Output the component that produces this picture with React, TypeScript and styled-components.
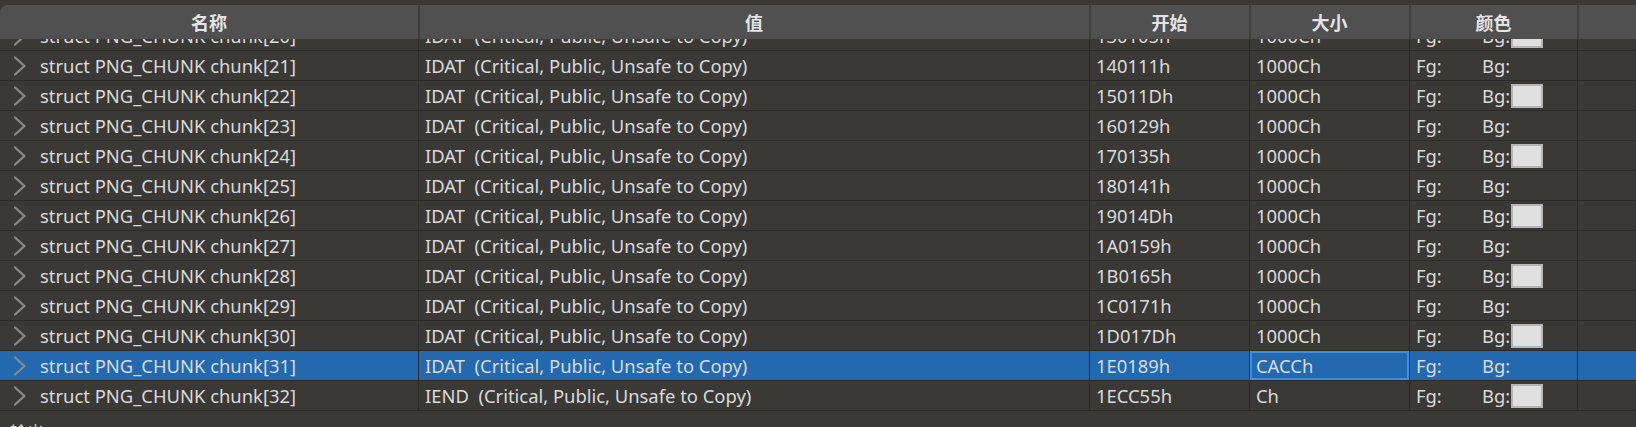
import React, { useLayoutEffect, useRef } from "react";
import styled, { createGlobalStyle, css } from "styled-components";

const GlobalStyle = createGlobalStyle`
  html, body {
    margin: 0;
    padding: 0;
    background: #3b3936;
    overflow: hidden;
  }
  * { box-sizing: border-box; }
`;

const COLS = "419px 671px 160px 160px 168px 1fr";
const FONT = `"Noto Sans", "Noto Sans CJK SC", sans-serif`;

const Page = styled.div`
  width: 1636px;
  height: 427px;
  background: #3b3936;
  padding-top: 5px;
  display: flex;
  flex-direction: column;
  font-family: ${FONT};
  overflow: hidden;
`;

const Header = styled.div`
  display: grid;
  grid-template-columns: ${COLS};
  height: 34px;
  background: #505050;
  border-top-left-radius: 8px;
  flex: none;
`;

const HeaderCell = styled.div`
  display: flex;
  align-items: center;
  justify-content: center;
  border-right: 2px solid #3e3e3e;
  margin-right: -1px;
  color: #e4e4e4;
  font-size: 18px;
  font-weight: 700;
  font-family: "Noto Sans CJK SC", sans-serif;
  &:last-child {
    border-right: none;
    margin-right: 0;
  }
`;

const Body = styled.div`
  height: 372px;
  overflow: hidden;
  flex: none;
  border-bottom: 1px solid #2b2a28;
`;

const Row = styled.div<{ $selected?: boolean }>`
  display: grid;
  grid-template-columns: ${COLS};
  height: 30px;
  border-bottom: 1px solid #2b2a28;
  background: ${(p) => (p.$selected ? "#2269b0" : "transparent")};
  color: #dadada;
  font-size: 18.4px;
`;

const Cell = styled.div<{ $focused?: boolean }>`
  display: flex;
  align-items: center;
  padding-left: 6px;
  border-right: 1px solid #2b2a28;
  white-space: nowrap;
  overflow: hidden;
  ${(p) =>
    p.$focused &&
    css`
      box-shadow: inset 0 0 0 2px #3a8fe6;
    `}
  &:last-child {
    border-right: none;
  }
`;

const NameCell = styled(Cell)`
  padding-left: 13px;
  gap: 13px;
`;

const ColorCell = styled(Cell)`
  gap: 0;
`;

const FgLabel = styled.span`
  width: 66px;
`;

const BgLabel = styled.span`
  display: flex;
  align-items: center;
  gap: 1px;
`;

const Swatch = styled.span`
  display: inline-block;
  width: 32px;
  height: 24px;
  background: #e0e0e0;
  border: 2px solid #b6b6b6;
`;

const Footer = styled.div`
  flex: 1;
  padding: 8px 0 0 10px;
  color: #d4d4d4;
  font-size: 17px;
  font-family: "Noto Sans CJK SC", sans-serif;
  overflow: hidden;
`;

const Chevron = () => (
  <svg width="14" height="20" viewBox="0 0 14 20" fill="none">
    <polyline
      points="2,1.5 11.5,10 2,18.5"
      stroke="#8a8a8a"
      strokeWidth="2.2"
      strokeLinecap="round"
      strokeLinejoin="round"
    />
  </svg>
);

type RowData = {
  idx: number;
  type: string;
  start: string;
  size: string;
};

const rows: RowData[] = [];
for (let i = 20; i <= 32; i++) {
  let start: number;
  if (i === 32) start = 0x1ecc55;
  else start = 0x130105 + (i - 20) * 0x1000c;
  rows.push({
    idx: i,
    type: i === 32 ? "IEND" : "IDAT",
    start: start.toString(16).toUpperCase() + "h",
    size: i === 31 ? "CACCh" : i === 32 ? "Ch" : "1000Ch",
  });
}

const headers = ["名称", "值", "开始", "大小", "颜色", ""];

export default function App() {
  const bodyRef = useRef<HTMLDivElement>(null);
  useLayoutEffect(() => {
    if (bodyRef.current) bodyRef.current.scrollTop = 18;
  }, []);

  return (
    <>
      <GlobalStyle />
      <Page>
        <Header>
          {headers.map((h, i) => (
            <HeaderCell key={i}>{h}</HeaderCell>
          ))}
        </Header>
        <Body ref={bodyRef}>
          {rows.map((r) => {
            const selected = r.idx === 31;
            return (
              <Row key={r.idx} $selected={selected}>
                <NameCell>
                  <Chevron />
                  <span>struct PNG_CHUNK chunk[{r.idx}]</span>
                </NameCell>
                <Cell>
                  {r.type}&nbsp;&nbsp;(Critical, Public, Unsafe to Copy)
                </Cell>
                <Cell>{r.start}</Cell>
                <Cell $focused={selected}>{r.size}</Cell>
                <ColorCell>
                  <FgLabel>Fg:</FgLabel>
                  <BgLabel>
                    Bg:{r.idx % 2 === 0 && <Swatch />}
                  </BgLabel>
                </ColorCell>
                <Cell />
              </Row>
            );
          })}
        </Body>
        <Footer>输出</Footer>
      </Page>
    </>
  );
}
